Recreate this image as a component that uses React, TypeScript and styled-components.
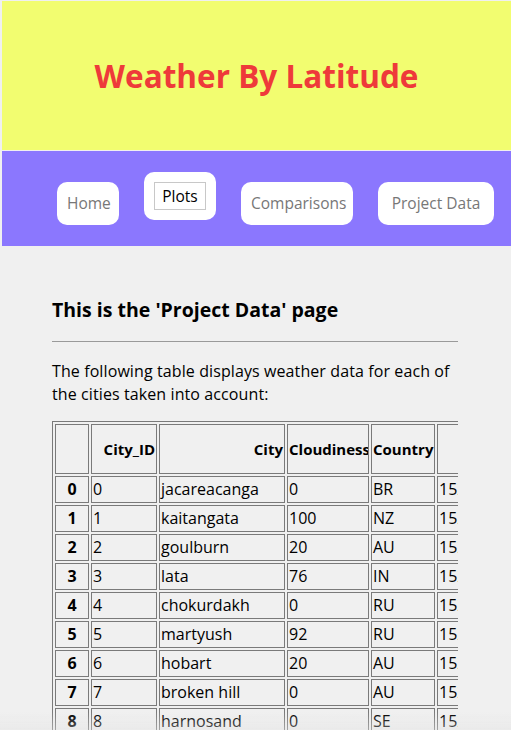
import React from "react";
import styled, { createGlobalStyle } from "styled-components";

const FONT = `"Open Sans", "DejaVu Sans", sans-serif`;

const GlobalStyle = createGlobalStyle`
    html {
        background: #f0f0f0;
        scrollbar-width: none;
    }
    ::-webkit-scrollbar {
        display: none;
    }
    body {
        margin: 1px 0 0 2px;
        font-family: ${FONT};
        color: #000;
    }
`

interface Column {
    label: string
    width: number
}

const columns: Column[] = [
    { label: "", width: 34 },
    { label: "City_ID", width: 66 },
    { label: "City", width: 126 },
    { label: "Cloudiness", width: 82 },
    { label: "Country", width: 64 },
    { label: "Date", width: 100 },
    { label: "Humidity", width: 80 },
    { label: "Lat", width: 64 },
    { label: "Lng", width: 70 },
    { label: "Max Temp", width: 56 },
    { label: "Wind Speed", width: 60 },
];

const cities: (string | number)[][] = [
    ["jacareacanga", 0, "BR", 1528902000, 62, -6.22, -57.76, 89.06, 2.51],
    ["kaitangata", 100, "NZ", 1528902113, 73, -46.28, 169.85, 44.81, 4.38],
    ["goulburn", 20, "AU", 1528900200, 93, -34.75, 149.72, 41.0, 5.82],
    ["lata", 76, "IN", 1528902114, 89, 30.78, 78.62, 65.48, 1.41],
    ["chokurdakh", 0, "RU", 1528902114, 78, 70.62, 147.9, 33.02, 6.55],
    ["martyush", 92, "RU", 1528902115, 77, 56.4, 61.88, 52.52, 4.72],
    ["hobart", 20, "AU", 1528898400, 66, -42.88, 147.33, 46.4, 13.87],
    ["broken hill", 0, "AU", 1528900200, 46, -31.97, 141.45, 51.8, 8.05],
    ["harnosand", 0, "SE", 1528899600, 71, 62.63, 17.94, 57.2, 9.17],
    ["rikitea", 88, "PF", 1528902116, 100, -23.12, -134.97, 75.02, 18.86],
    ["ushuaia", 75, "AR", 1528898400, 74, -54.81, -68.31, 35.6, 9.17],
    ["bredasdorp", 0, "ZA", 1528898400, 87, -34.53, 20.04, 55.4, 2.24],
];

const navItems = [
    { label: "Home", width: 62 },
    { label: "Plots", width: 72 },
    { label: "Comparisons", width: 112 },
    { label: "Project Data", width: 116 },
];

const App = () => {
    const tableWidth = columns.reduce((sum, c) => sum + c.width, 0) + (columns.length + 1) * 2 + 2;

    return(
        <>
            <GlobalStyle />
            <Header>
                <Title>Weather By Latitude</Title>
            </Header>
            <Nav>
                {navItems.map((item) => (
                    <NavButton key={item.label} $width={item.width} $active={item.label === "Plots"}>
                        {item.label === "Plots" ? <FocusLabel>{item.label}</FocusLabel> : item.label}
                    </NavButton>
                ))}
            </Nav>
            <Main>
                <PageHeading>This is the 'Project Data' page</PageHeading>
                <Rule />
                <Intro>The following table displays weather data for each of the cities taken into account:</Intro>
                <TableWrapper>
                    <DataTable style={{ width: tableWidth }}>
                        <thead>
                            <tr>
                                {columns.map((c) => (
                                    <HeadCell key={c.label} style={{ width: c.width - 4 }}>{c.label}</HeadCell>
                                ))}
                            </tr>
                        </thead>
                        <tbody>
                            {cities.map((row, i) => (
                                <tr key={i}>
                                    <IndexCell>{i}</IndexCell>
                                    <Cell>{i}</Cell>
                                    {row.map((value, j) => (
                                        <Cell key={j}>{value}</Cell>
                                    ))}
                                </tr>
                            ))}
                        </tbody>
                    </DataTable>
                </TableWrapper>
            </Main>
            <BottomFade />
        </>
    )
}

const Header = styled.header`
    height: 149px;
    background: #f2fd70;
    display: flex;
    align-items: center;
    justify-content: center;
`

const Title = styled.h1`
    margin: 0;
    font-size: 31.5px;
    font-weight: 700;
    color: #ee3a3a;
`

const Nav = styled.nav`
    height: 95px;
    margin-top: 1px;
    box-sizing: border-box;
    background: #8b77fe;
    display: flex;
    align-items: flex-start;
    gap: 25px;
    padding: 31px 0 0 55px;
`

const NavButton = styled.button<{ $active?: boolean; $width: number }>`
    width: ${(p) => p.$width}px;
    flex-shrink: 0;
    background: #fff;
    border: none;
    border-radius: 10px;
    padding: 10px;
    font-family: ${FONT};
    font-size: 15.5px;
    line-height: 23px;
    text-align: center;
    white-space: nowrap;
    color: ${(p) => (p.$active ? "#000" : "#777")};
    transform: ${(p) => (p.$active ? "translateY(-10px)" : "none")};
    cursor: pointer;
`

const FocusLabel = styled.span`
    display: block;
    line-height: 22px;
    padding: 2px 5px;
    border: 1px solid #c8c8c8;
`

const Main = styled.main`
    padding: 51px 53px 0 50px;
`

const PageHeading = styled.h3`
    margin: 0;
    font-size: 19.5px;
    font-weight: 700;
    line-height: 26px;
`

const Rule = styled.hr`
    margin: 18px 0 0;
    border: none;
    border-top: 1px solid #9a9a9a;
`

const Intro = styled.p`
    margin: 18px 0 0;
    font-size: 16px;
    line-height: 23px;
    letter-spacing: 0.1px;
`

const TableWrapper = styled.div`
    margin-top: 15px;
    overflow-x: auto;
`

const DataTable = styled.table`
    table-layout: fixed;
    border-collapse: separate;
    border-spacing: 2px;
    border: 1px solid #7a7a7a;
    font-size: 16px;
    line-height: 23px;
`

const HeadCell = styled.th`
    border: 1px solid #7a7a7a;
    padding: 1px;
    text-align: right;
    vertical-align: middle;
    font-size: 15px;
    font-weight: 700;
    overflow: hidden;
`

const IndexCell = styled.th`
    border: 1px solid #7a7a7a;
    padding: 1px;
    text-align: center;
    font-weight: 700;
`

const Cell = styled.td`
    border: 1px solid #7a7a7a;
    padding: 1px;
    text-align: left;
    white-space: nowrap;
    overflow: hidden;
`

const BottomFade = styled.div`
    position: fixed;
    left: 0;
    right: 0;
    bottom: 0;
    height: 18px;
    background: linear-gradient(to bottom, rgba(236, 236, 236, 0), rgba(226, 226, 226, 0.4));
    pointer-events: none;
`

export default App;
